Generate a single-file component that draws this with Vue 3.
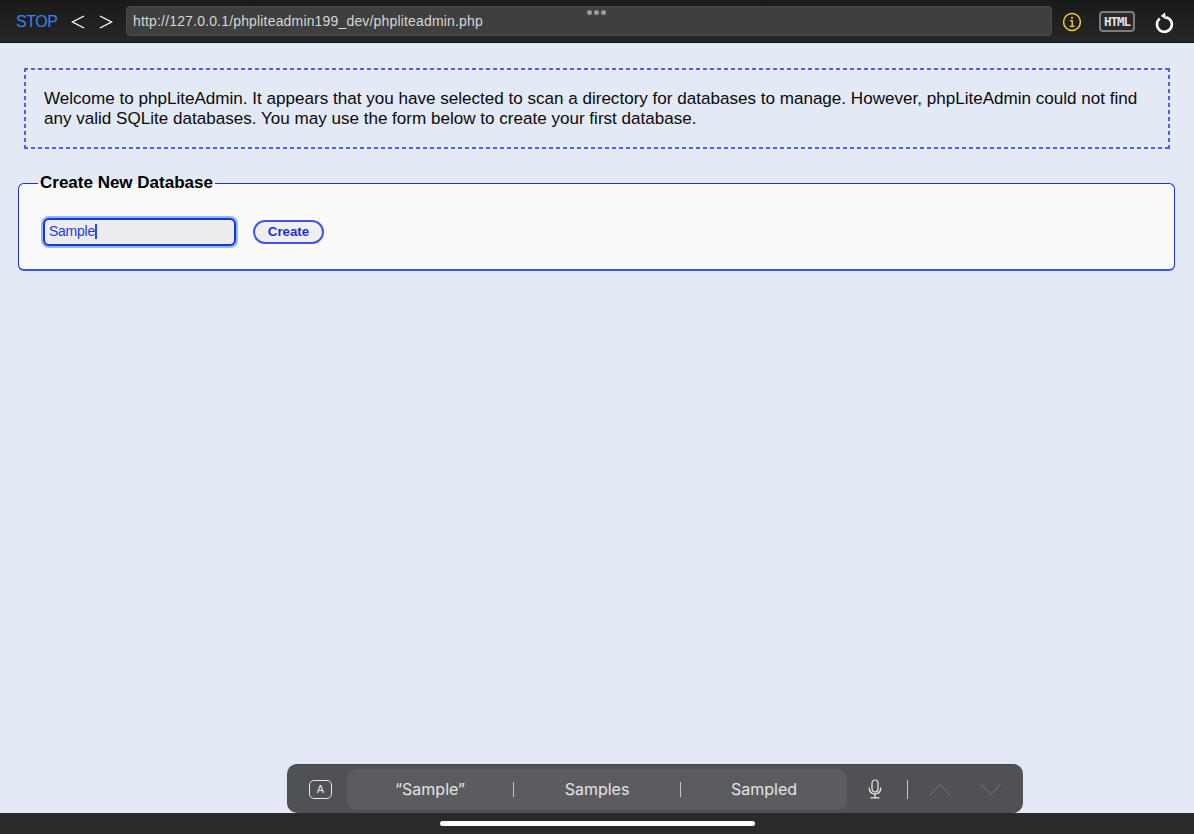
<script setup>
const suggestions = ['“Sample”', 'Samples', 'Sampled']
</script>

<template>
  <div class="page">
    <header class="toolbar">
      <span class="stop">STOP</span>
      <svg class="chev first" width="14" height="16" viewBox="0 0 14 16"><path d="M13 2 1.5 8 13 14" /></svg>
      <svg class="chev" width="14" height="16" viewBox="0 0 14 16"><path d="M1 2 12.5 8 1 14" /></svg>
      <div class="url">http://127.0.0.1/phpliteadmin199_dev/phpliteadmin.php</div>
      <svg class="info" width="20" height="20" viewBox="0 0 20 20">
        <circle cx="10" cy="10" r="8.4" />
        <path d="M7.8 8.6H10.2V14.2M7.6 14.4H12.6" />
        <circle class="dot" cx="10" cy="5.8" r="1.1" />
      </svg>
      <div class="html-badge">HTML</div>
      <svg class="reload" width="20" height="24" viewBox="0 0 20 24">
        <path class="arc" d="M5.8 8.6A7.4 7.4 0 1 0 12.2 7.2" />
        <path class="head" d="M11 2.4 12.2 9.4 6.8 6Z" />
      </svg>
      <div class="dots"><i></i><i></i><i></i></div>
    </header>

    <main class="content">
      <div class="notice">
        Welcome to phpLiteAdmin. It appears that you have selected to scan a directory for databases to manage. However, phpLiteAdmin could not find any valid SQLite databases. You may use the form below to create your first database.
      </div>
      <fieldset class="panel">
        <legend>Create New Database</legend>
        <div class="form-row">
          <div class="field">Sample<span class="caret"></span></div>
          <button class="btn" type="button">Create</button>
        </div>
      </fieldset>
    </main>

    <footer class="homebar"><span class="indicator"></span></footer>

    <div class="assist">
      <span class="key-a">A</span>
      <div class="sugg">
        <template v-for="(s, i) in suggestions" :key="s">
          <span class="sep" v-if="i > 0"></span>
          <span class="word">{{ s }}</span>
        </template>
      </div>
      <svg class="mic" width="16" height="20" viewBox="0 0 16 20">
        <rect x="5" y="1" width="6" height="12" rx="3" />
        <path d="M2.2 8.5C2.2 12.5 4.6 14.9 8 14.9S13.8 12.5 13.8 8.5M8 14.9V18.6M3.5 18.8H12.5" />
      </svg>
      <span class="sep tall"></span>
      <svg class="nav up" width="22" height="13" viewBox="0 0 22 13"><path d="M1 12 11 1.5 21 12" /></svg>
      <svg class="nav down" width="22" height="13" viewBox="0 0 22 13"><path d="M1 1 11 11.5 21 1" /></svg>
    </div>
  </div>
</template>

<style>
html, body { margin: 0; padding: 0; }
</style>

<style scoped>
.page {
  position: relative;
  width: 1194px;
  height: 834px;
  display: flex;
  flex-direction: column;
  overflow: hidden;
  background: #e3e9f5;
  font-family: "Liberation Sans", Arial, sans-serif;
}
.toolbar {
  position: relative;
  flex: 0 0 43px;
  box-sizing: border-box;
  display: flex;
  align-items: center;
  padding: 0 0 0 16px;
  background: linear-gradient(#1a1a1a, #262626);
  border-bottom: 1px solid #111;
}
.stop { color: #3a82f0; font-size: 16px; letter-spacing: -0.45px; width: 41px; margin-top: 1px; }
.chev { margin-top: 1px; }
.chev path { fill: none; stroke: #fff; stroke-width: 1.4; }
.chev.first { margin: 1px 14px 0 14px; }
.url {
  box-sizing: border-box;
  width: 926px;
  height: 30px;
  margin-left: 13px;
  padding-left: 6px;
  line-height: 29px;
  font-size: 14px;
  letter-spacing: 0.17px;
  color: #d6d6d6;
  background: #3f3f3f;
  border: 1px solid #4c4c4c;
  border-radius: 4px;
}
.info { margin-left: 10px; margin-top: 1px; }
.info circle { fill: none; stroke: #f3cf2e; stroke-width: 1.5; }
.info path { fill: none; stroke: #f3cf2e; stroke-width: 1.4; }
.info .dot { fill: #f3cf2e; stroke: none; }
.html-badge {
  box-sizing: border-box;
  width: 36px;
  height: 21px;
  margin-left: 17px;
  margin-top: 1px;
  border: 2px solid #7d7d7d;
  border-radius: 4px;
  background: #2a2a2a;
  color: #e2e2e2;
  font-family: "DejaVu Sans Mono", monospace;
  font-weight: 700;
  font-size: 12.5px;
  line-height: 17px;
  text-align: center;
  letter-spacing: -1px;
}
.reload { margin-left: 19px; margin-top: 1px; }
.reload .arc { fill: none; stroke: #fff; stroke-width: 2.6; }
.reload .head { fill: #fff; }
.dots { position: absolute; left: 587px; top: 10px; display: flex; gap: 2px; }
.dots i { width: 5px; height: 5px; border-radius: 50%; background: #9a9a9a; }

.content {
  flex: 1;
  min-height: 0;
  box-sizing: border-box;
  padding: 25px 19px 0 18px;
}
.notice {
  box-sizing: border-box;
  height: 81px;
  margin: 0 5px 0 6px;
  padding: 21px 20px 0;
  background:
    linear-gradient(to right, #4a62f0 58%, transparent 0) top left / 7px 2px repeat-x,
    linear-gradient(to right, #4a62f0 58%, transparent 0) bottom left / 7px 2px repeat-x,
    linear-gradient(to bottom, #4a62f0 58%, transparent 0) top left / 2px 7px repeat-y,
    linear-gradient(to bottom, #4a62f0 58%, transparent 0) top right / 2px 7px repeat-y;
  font-size: 17.07px;
  line-height: 20px;
  color: #0a0a0a;
}
.panel {
  box-sizing: border-box;
  height: 98px;
  margin: 24px 0 0;
  padding: 0 0 0 24px;
  border: 1px solid #1f2fe0;
  border-bottom: 2px solid #3f54ec;
  border-radius: 6px;
  background: #fafafa;
  background-clip: padding-box;
}
.panel legend {
  margin-left: -5px;
  padding: 0 2px;
  font-size: 17px;
  font-weight: 700;
  line-height: 20px;
  color: #000;
}
.form-row { display: flex; align-items: center; margin-top: 25px; }
.field {
  box-sizing: border-box;
  width: 193px;
  height: 28px;
  padding: 0 0 2px 4px;
  font-size: 14px;
  letter-spacing: -0.25px;
  color: #2438e8;
  background: #ececec;
  border: 2px solid #1c33dc;
  border-radius: 6px;
  box-shadow: 0 0 0 2px #8cb8fb;
  display: flex;
  align-items: center;
}
.caret { width: 2px; height: 15px; background: #2a40e8; }
.btn {
  box-sizing: border-box;
  width: 71px;
  height: 24px;
  margin: 0 0 1px 17px;
  padding: 0;
  font: 700 13.3px "Liberation Sans", Arial, sans-serif;
  color: #1c33dc;
  background: #efefef;
  border: 2px solid #3f54ec;
  border-radius: 13px;
}

.homebar {
  flex: 0 0 21px;
  display: flex;
  justify-content: center;
  padding-top: 8px;
  box-sizing: border-box;
  background: #2a2a2a;
}
.indicator { width: 315px; height: 5px; border-radius: 3px; background: #fff; }

.assist {
  position: absolute;
  left: 287px;
  top: 764px;
  box-sizing: border-box;
  width: 736px;
  height: 49px;
  display: flex;
  align-items: center;
  padding: 0 0 0 22px;
  background: #4f5154;
  border-radius: 10px;
  border-top: 1px solid #444649;
  color: #e8e8e8;
}
.key-a {
  box-sizing: border-box;
  width: 23px;
  height: 19px;
  border: 1.3px solid #e6e6e6;
  border-radius: 5px;
  font-size: 11px;
  line-height: 16.5px;
  text-align: center;
}
.sugg {
  width: 500px;
  height: 41px;
  margin-left: 15px;
  display: flex;
  align-items: center;
  background: #5a5c60;
  border-radius: 9px;
}
.word {
  flex: 1;
  text-align: center;
  font-family: Inter, "Liberation Sans", sans-serif;
  font-size: 16px;
  color: #e4e4e4;
}
.sep { width: 1px; height: 15px; background: #c4c4c4; flex: none; }
.sep.tall { height: 19px; margin-left: 24px; }
.mic { margin-left: 20px; }
.mic rect, .mic path { fill: none; stroke: #e8e8e8; stroke-width: 1.2; }
.nav path { fill: none; stroke: #67696c; stroke-width: 1.2; }
.nav.up { margin-left: 21px; }
.nav.down { margin-left: 29px; }
</style>
